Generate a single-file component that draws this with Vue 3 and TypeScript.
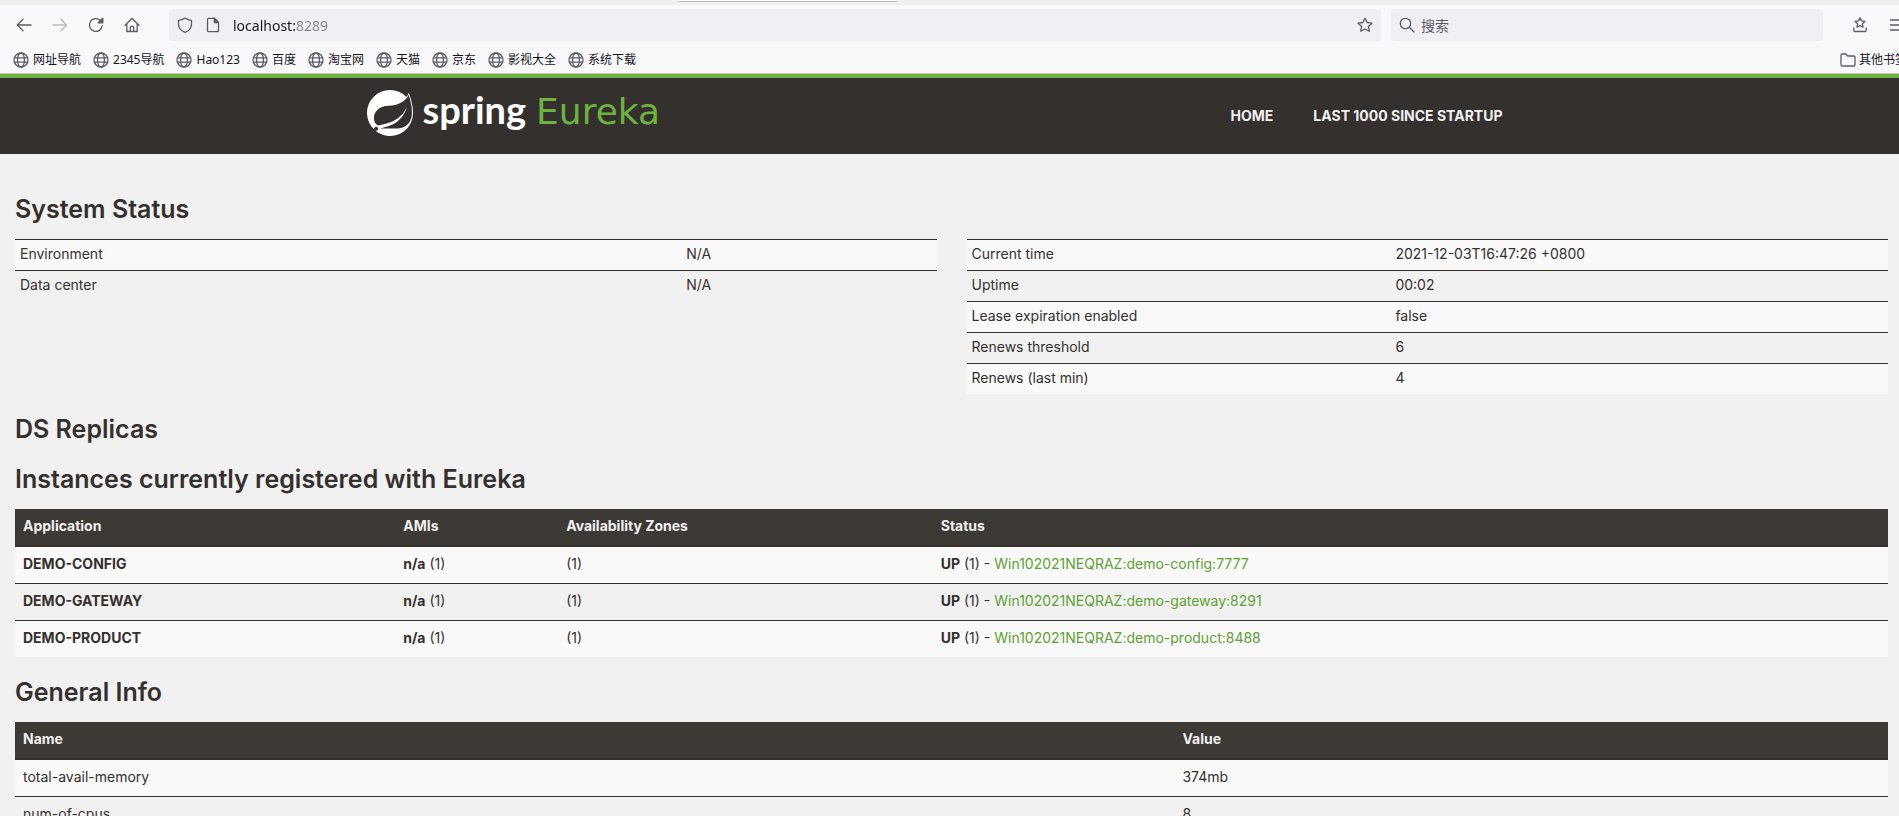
<script setup lang="ts">
import { ref } from 'vue'

interface Instance { app: string; ami: string; count: number; host: string }
type Pair = [string, string]

const address = ref('localhost:8289')
const query = ref('')

const bookmarks: string[] = ['网址导航', '2345导航', 'Hao123', '百度', '淘宝网', '天猫', '京东', '影视大全', '系统下载']

const environment: Pair[] = [['Environment', 'N/A'], ['Data center', 'N/A']]

const runtime: Pair[] = [
  ['Current time', '2021-12-03T16:47:26 +0800'],
  ['Uptime', '00:02'],
  ['Lease expiration enabled', 'false'],
  ['Renews threshold', '6'],
  ['Renews (last min)', '4'],
]

const instances: Instance[] = [
  { app: 'DEMO-CONFIG', ami: 'n/a', count: 1, host: 'Win102021NEQRAZ:demo-config:7777' },
  { app: 'DEMO-GATEWAY', ami: 'n/a', count: 1, host: 'Win102021NEQRAZ:demo-gateway:8291' },
  { app: 'DEMO-PRODUCT', ami: 'n/a', count: 1, host: 'Win102021NEQRAZ:demo-product:8488' },
]

const general: Pair[] = [['total-avail-memory', '374mb'], ['num-of-cpus', '8']]
</script>

<template>
  <div class="browser">
    <header class="chrome">
      <div class="tabstrip"><span class="tab-edge"></span></div>

      <div class="toolbar">
        <nav class="history" aria-label="Browser navigation">
          <button type="button" aria-label="Back">
            <svg viewBox="0 0 16 16"><path d="M15 8H1.5M7 2.3 1.3 8 7 13.7" /></svg>
          </button>
          <button type="button" aria-label="Forward" disabled>
            <svg viewBox="0 0 16 16"><path d="M1 8h13.5M9 2.3 14.7 8 9 13.7" /></svg>
          </button>
          <button type="button" aria-label="Reload">
            <svg viewBox="0 0 16 16"><path d="M14.2 8.6a6.4 6.4 0 1 1-2-5.3l1.6 1.6" /><path class="solid" d="M14.8 1.2v4.6h-4.6z" /></svg>
          </button>
          <button type="button" aria-label="Home">
            <svg viewBox="0 0 16 16"><path d="M1 8.2 8 1.5l7 6.7M2.8 6.8v7.7h10.4V6.8M6.3 14.2v-3.4a1.7 1.7 0 0 1 3.4 0v3.4" /></svg>
          </button>
        </nav>

        <div class="field address">
          <svg class="icon" viewBox="0 0 16 16"><path d="M8 1c2 1.500 4.200 2.200 6.500 2.300V7c0 4-2.800 7-6.500 8.400C4.300 14 1.500 11 1.500 7V3.300C3.800 3.200 6 2.500 8 1z" /></svg>
          <svg class="icon" viewBox="0 0 16 16"><path d="M3.500 1.300h5.800l4.200 4.200v8.200a1 1 0 0 1-1 1h-9a1 1 0 0 1-1-1V2.300a1 1 0 0 1 1-1z" /><path class="solid" d="M9.300 1.300v4.200h4.200z" /></svg>
          <input v-model="address" type="text" aria-label="Address" />
          <button type="button" aria-label="Bookmark this page">
            <svg viewBox="0 0 16 16"><path d="m8 1.200 2.100 4.300 4.800.7-3.500 3.300.9 4.800L8 12l-4.300 2.300.9-4.800L1.100 6.200l4.800-.7z" /></svg>
          </button>
        </div>

        <label class="field search">
          <svg class="icon" viewBox="0 0 16 16"><circle cx="6.500" cy="6.500" r="5.200" /><path d="m10.300 10.300 4.700 4.700" /></svg>
          <input v-model="query" type="text" placeholder="搜索" aria-label="搜索" />
        </label>

        <div class="tools">
          <button type="button" aria-label="Saved items">
            <svg viewBox="0 0 16 16"><path d="m8 .8 1.500 3.100 3.400.5-2.500 2.400.6 3.400L8 8.600l-3 1.600.6-3.400-2.500-2.400 3.400-.5zM1.800 11v2.200a1.300 1.300 0 0 0 1.300 1.300h9.800a1.300 1.300 0 0 0 1.300-1.300V11" /></svg>
          </button>
          <button type="button" aria-label="Menu">
            <svg viewBox="0 0 16 16"><path d="M0 3h16M0 8h16M0 13h16" /></svg>
          </button>
        </div>
      </div>

      <nav class="bookmarks" aria-label="Bookmarks">
        <a v-for="name in bookmarks" :key="name" href="#">
          <svg viewBox="0 0 16 16"><circle cx="8" cy="8" r="7" /><ellipse cx="8" cy="8" rx="3.500" ry="7" /><path d="M1.500 5.800h13M1.500 10.200h13" /></svg>
          <span>{{ name }}</span>
        </a>
        <a class="other" href="#">
          <svg viewBox="0 0 16 16"><path d="M1 3.300a1.300 1.300 0 0 1 1.300-1.300h3.500l1.900 2h6a1.300 1.300 0 0 1 1.300 1.300v7.400a1.300 1.300 0 0 1-1.300 1.300H2.300A1.300 1.300 0 0 1 1 12.700z" /></svg>
          <span>其他书签</span>
        </a>
      </nav>
    </header>

    <div class="page">
      <header class="navbar">
        <div class="navbar-inner">
          <a class="brand" href="#" aria-label="Spring Eureka">
            <svg viewBox="0 0 24 24"><path d="M21.8537 1.4158a10.4504 10.4504 0 0 1-1.284 2.2471A11.9666 11.9666 0 1 0 3.8518 20.7757l.4445.3951a11.9543 11.9543 0 0 0 19.6316-8.2971c.3457-3.0126-.568-6.8649-2.0742-11.458zM5.5805 20.8745a1.0174 1.0174 0 1 1-.1482-1.4323 1.0396 1.0396 0 0 1 .1482 1.4323zm16.1991-3.5806c-2.9385 3.9263-9.2601 2.5928-13.2852 2.7904 0 0-.7161.0494-1.4323.1481 0 0 .2717-.1234.6174-.2469 2.8398-.9877 4.1732-1.1853 5.9018-2.0742 3.2349-1.6545 6.4698-5.2844 7.1118-9.0379-1.2347 3.6053-4.9881 6.7163-8.3959 7.9757-2.3459.8643-6.5687 1.7039-6.5687 1.7039l-.1729-.0988c-2.8645-1.4076-2.9632-7.6304 2.2718-9.6306 2.2966-.889 4.4696-.395 6.9637-.9877 2.6422-.6174 5.7043-2.5929 6.939-5.1857 1.3828 4.1732 3.062 10.643.0493 14.6434z" /></svg>
            <span class="wordmark"><b>spring</b><i>Eureka</i></span>
          </a>
          <nav class="menu" aria-label="Main">
            <a href="#">HOME</a>
            <a href="#">LAST 1000 SINCE STARTUP</a>
          </nav>
        </div>
      </header>

      <main class="content">
        <h1>System Status</h1>
        <div class="columns">
          <table class="condensed environment">
            <tbody>
              <tr v-for="[label, value] in environment" :key="label"><td>{{ label }}</td><td>{{ value }}</td></tr>
            </tbody>
          </table>
          <table class="condensed runtime">
            <tbody>
              <tr v-for="[label, value] in runtime" :key="label"><td>{{ label }}</td><td>{{ value }}</td></tr>
            </tbody>
          </table>
        </div>

        <h1>DS Replicas</h1>

        <h1>Instances currently registered with Eureka</h1>
        <table class="listing instances">
          <thead>
            <tr><th>Application</th><th>AMIs</th><th>Availability Zones</th><th>Status</th></tr>
          </thead>
          <tbody>
            <tr v-for="item in instances" :key="item.app">
              <td><b>{{ item.app }}</b></td>
              <td><b>{{ item.ami }}</b> ({{ item.count }})</td>
              <td>({{ item.count }})</td>
              <td><b>UP</b> ({{ item.count }}) - <a href="#">{{ item.host }}</a></td>
            </tr>
          </tbody>
        </table>

        <h1>General Info</h1>
        <table class="listing general">
          <thead>
            <tr><th>Name</th><th>Value</th></tr>
          </thead>
          <tbody>
            <tr v-for="[label, value] in general" :key="label"><td>{{ label }}</td><td>{{ value }}</td></tr>
          </tbody>
        </table>
      </main>
    </div>
  </div>
</template>

<style>
body {
  margin: 0;
  background: #f1f1f1;
}
</style>

<style scoped>
.browser {
  display: flex;
  flex-direction: column;
  height: 100vh;
  overflow: hidden;
  font-family: "Inter", "Noto Sans CJK SC", sans-serif;
}

.browser * {
  box-sizing: border-box;
}

a {
  text-decoration: none;
}

/* Browser chrome */
.chrome {
  flex: none;
  background: #f9f9fb;
  border-bottom: 1px solid #cccccf;
  color: #15141a;
  font-family: "Noto Sans", "Noto Sans CJK SC", sans-serif;
}

.chrome svg {
  display: block;
  flex: none;
  width: 16px;
  height: 16px;
  fill: none;
  stroke: #5b5b66;
  stroke-width: 1.3;
  stroke-linecap: round;
  stroke-linejoin: round;
}

.chrome svg .solid {
  fill: #5b5b66;
}

.chrome button {
  display: block;
  padding: 0;
  border: 0;
  background: none;
}

.chrome button:disabled {
  opacity: 0.4;
}

.tabstrip {
  position: relative;
  height: 5px;
  background: #f0f0f0;
}

.tab-edge {
  position: absolute;
  top: 0;
  left: 677px;
  width: 221px;
  height: 2px;
  border-bottom: 1px solid #b9bdbf;
  border-radius: 0 0 3px 3px;
  background: #ffffff;
}

.toolbar {
  display: grid;
  grid-template-columns: 169px minmax(0, 1212fr) minmax(0, 442fr) 76px;
  align-items: center;
  height: 40px;
}

.history {
  display: flex;
  gap: 20px;
  padding-left: 16px;
}

.field {
  display: flex;
  align-items: center;
  height: 32px;
  border-radius: 4px;
  background: #f0f0f4;
}

.field input {
  flex: 1;
  min-width: 0;
  padding: 0;
  border: 0;
  outline: 0;
  background: none;
  color: #15141a;
  font: inherit;
}

.address {
  gap: 12px;
  padding: 0 8px;
  font-size: 14px;
}

/* The port is shown dimmer than the host name. */
.address input {
  background: linear-gradient(90deg, #15141a 62px, #85858d 62px);
  background-clip: text;
  -webkit-background-clip: text;
  color: transparent;
}

.search {
  gap: 6px;
  margin-left: 10px;
  padding: 0 8px;
  font-size: 14px;
}

.search input::placeholder {
  color: #5b5b66;
  opacity: 1;
}

.tools {
  display: flex;
  gap: 22px;
  padding-left: 29px;
  overflow: hidden;
}

.tools button {
  flex: none;
}

.bookmarks {
  display: flex;
  align-items: center;
  gap: 12px;
  height: 28px;
  padding: 1px 0 0 13px;
  overflow: hidden;
}

.bookmarks a {
  display: flex;
  flex: none;
  align-items: center;
  gap: 4px;
  color: #15141a;
  font-size: 12px;
  line-height: 16px;
  white-space: nowrap;
}

.bookmarks .other {
  width: 59px;
  margin-left: auto;
  gap: 3px;
}

/* Page */
.page {
  flex: 1;
  min-height: 0;
  overflow: hidden;
  background: #f1f1f1;
  color: #34302d;
  font-size: 14px;
  line-height: 20px;
}

.navbar {
  border-top: 4px solid #6db33f;
  background: #34302d;
}

.navbar-inner {
  display: flex;
  justify-content: space-between;
  width: 1170px;
  max-width: 100%;
  height: 76px;
  margin: 0 auto;
}

.brand {
  display: flex;
  align-items: flex-start;
  gap: 10px;
  padding: 12px 0 0 2px;
}

.brand svg {
  width: 46px;
  height: 46px;
  fill: #ffffff;
}

.wordmark {
  display: flex;
  align-items: baseline;
  gap: 10px;
}

.wordmark b {
  color: #ffffff;
  font: 700 38px/38px "Lato", sans-serif;
}

.wordmark i {
  color: #6db33f;
  font: normal 36px/38px "DejaVu Sans", sans-serif;
}

.menu {
  display: flex;
  align-items: center;
  padding-right: 12px;
}

.menu a {
  padding: 0 20px;
  color: #f1f1f1;
  font-weight: 700;
}

.content {
  padding: 20px 11px 20px 15px;
}

h1 {
  margin: 20px 0 15px;
  font-size: 25px;
  font-weight: 600;
  line-height: 30px;
}

.columns {
  display: grid;
  grid-template-columns: 1fr 1fr;
  align-items: start;
  gap: 30px;
}

table {
  width: 100%;
  border-collapse: collapse;
  border-spacing: 0;
  table-layout: fixed;
}

th,
td {
  text-align: left;
  vertical-align: top;
}

tbody tr:nth-child(odd) {
  background: #f9f9f9;
}

.condensed td {
  padding: 4px 5px 6px;
  border-top: 1px solid #34302d;
}

.environment td:first-child {
  width: 72.3%;
}

.runtime td:first-child {
  width: 46%;
}

.listing th {
  padding: 7px 8px 9px;
  border-bottom: 2px solid #34302d;
  background: #3d3934;
  color: #f1f1f1;
}

.listing td {
  padding: 7px 8px 9px;
}

.listing tr + tr td {
  border-top: 1px solid #34302d;
}

.listing a {
  color: #5fa134;
}

.instances th:nth-child(1) {
  width: 20.3%;
}

.instances th:nth-child(2) {
  width: 8.7%;
}

.instances th:nth-child(3) {
  width: 20%;
}

.general th:first-child {
  width: 61.9%;
}
</style>
